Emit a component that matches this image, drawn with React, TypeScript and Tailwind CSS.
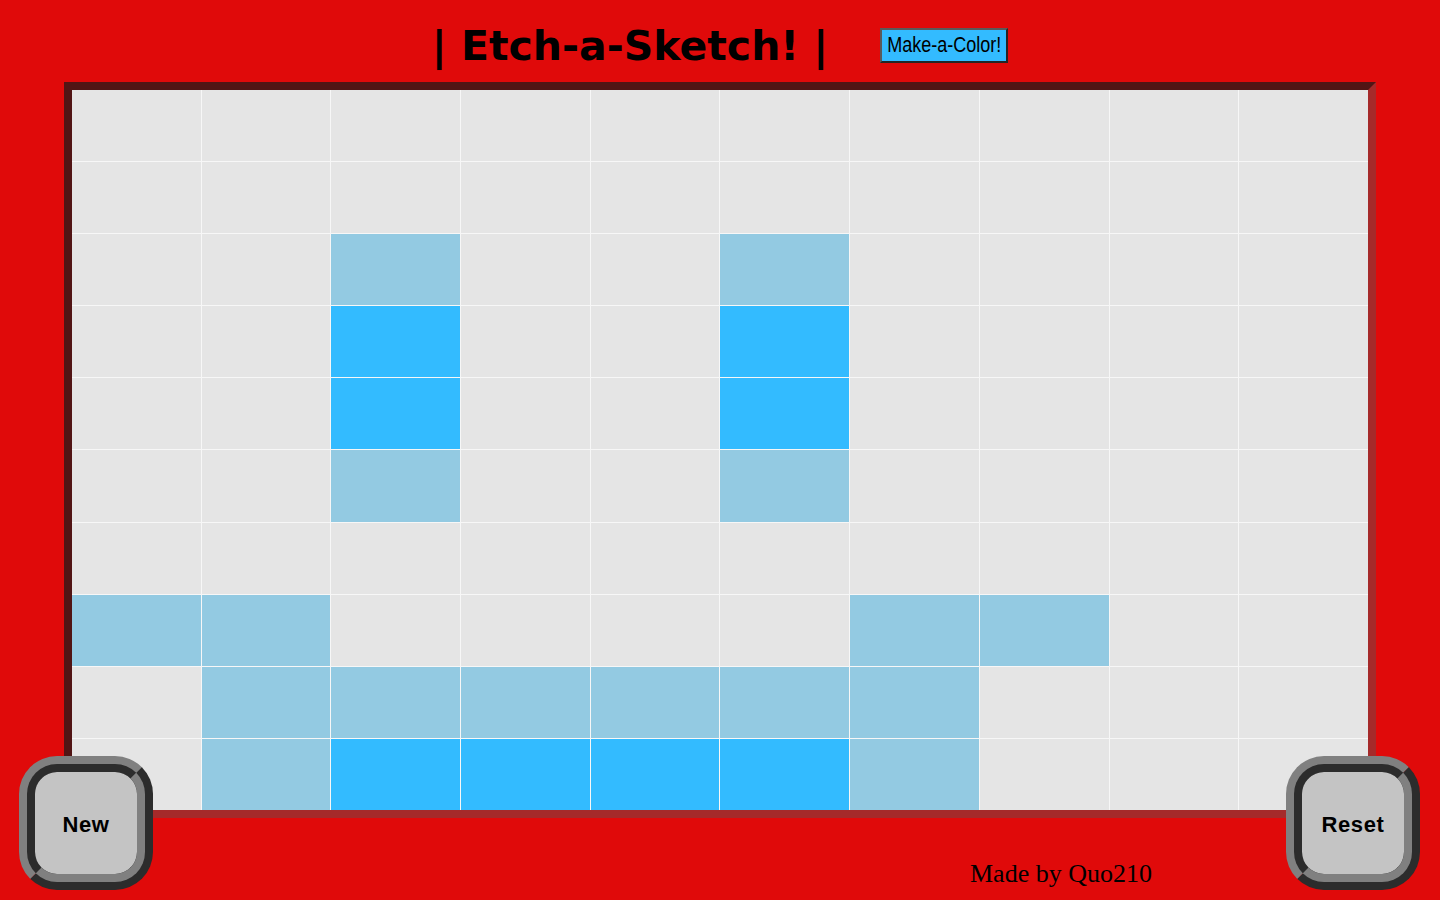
import React from "react";

const G = "g", L = "l", B = "b";
const rows: string[][] = [
  [G, G, G, G, G, G, G, G, G, G],
  [G, G, G, G, G, G, G, G, G, G],
  [G, G, L, G, G, L, G, G, G, G],
  [G, G, B, G, G, B, G, G, G, G],
  [G, G, B, G, G, B, G, G, G, G],
  [G, G, L, G, G, L, G, G, G, G],
  [G, G, G, G, G, G, G, G, G, G],
  [L, L, G, G, G, G, L, L, G, G],
  [G, L, L, L, L, L, L, G, G, G],
  [G, L, B, B, B, B, L, G, G, G],
];

function cellClass(c: string) {
  if (c === L) return "bg-[#93cae2]";
  if (c === B) return "bg-[#33bbff]";
  return "bg-[#e5e5e5]";
}

function Knob({ label }: { label: string }) {
  return (
    <button className="w-[134px] h-[134px] rounded-[38px] border-[16px] [border-style:ridge] border-[#808080] bg-[#c4c4c4] flex items-center justify-center shrink-0">
      <span className="relative top-[2px] font-['Liberation_Sans',Arial,sans-serif] font-bold text-[22px] tracking-[0.6px] text-black leading-none">
        {label}
      </span>
    </button>
  );
}

export default function App() {
  return (
    <div className="w-[1440px] h-[900px] bg-[#e00a0a] overflow-hidden">
      <header className="h-[82px] pt-[8px] flex items-center justify-center gap-[52px]">
        <h1 className="relative top-[1px] font-['DejaVu_Sans',Verdana,sans-serif] font-bold text-[41px] leading-none text-black whitespace-pre">
          | Etch-a-Sketch! |
        </h1>
        <button className="w-[128px] h-[35px] bg-[#33bbff] border-2 border-t-[#5a5a5a] border-l-[#5a5a5a] border-r-[#252525] border-b-[#252525] flex items-center justify-center">
          <span className="inline-block font-['Liberation_Sans',Arial,sans-serif] text-[18px] leading-none text-black scale-y-[1.18]">
            Make-a-Color!
          </span>
        </button>
      </header>
      <div className="mx-[64px] border-8 border-t-[#511515] border-l-[#511515] border-r-[#a52a2a] border-b-[#a52a2a]">
        <div className="grid grid-cols-10 grid-rows-10 gap-px bg-[#f7f7f7] h-[720px]">
          {rows.flatMap((r, i) =>
            r.map((c, j) => <div key={`${i}-${j}`} className={cellClass(c)} />)
          )}
        </div>
      </div>
      <div className="-mt-[62px] h-[144px] flex items-start pl-[19px] pr-[20px] relative">
        <Knob label="New" />
        <div className="flex-1 pt-[103px] pl-[817px]">
          <span className="font-['Liberation_Serif','Times_New_Roman',serif] text-[26px] leading-[30px] text-black whitespace-nowrap">
            Made by Quo210
          </span>
        </div>
        <Knob label="Reset" />
      </div>
    </div>
  );
}
